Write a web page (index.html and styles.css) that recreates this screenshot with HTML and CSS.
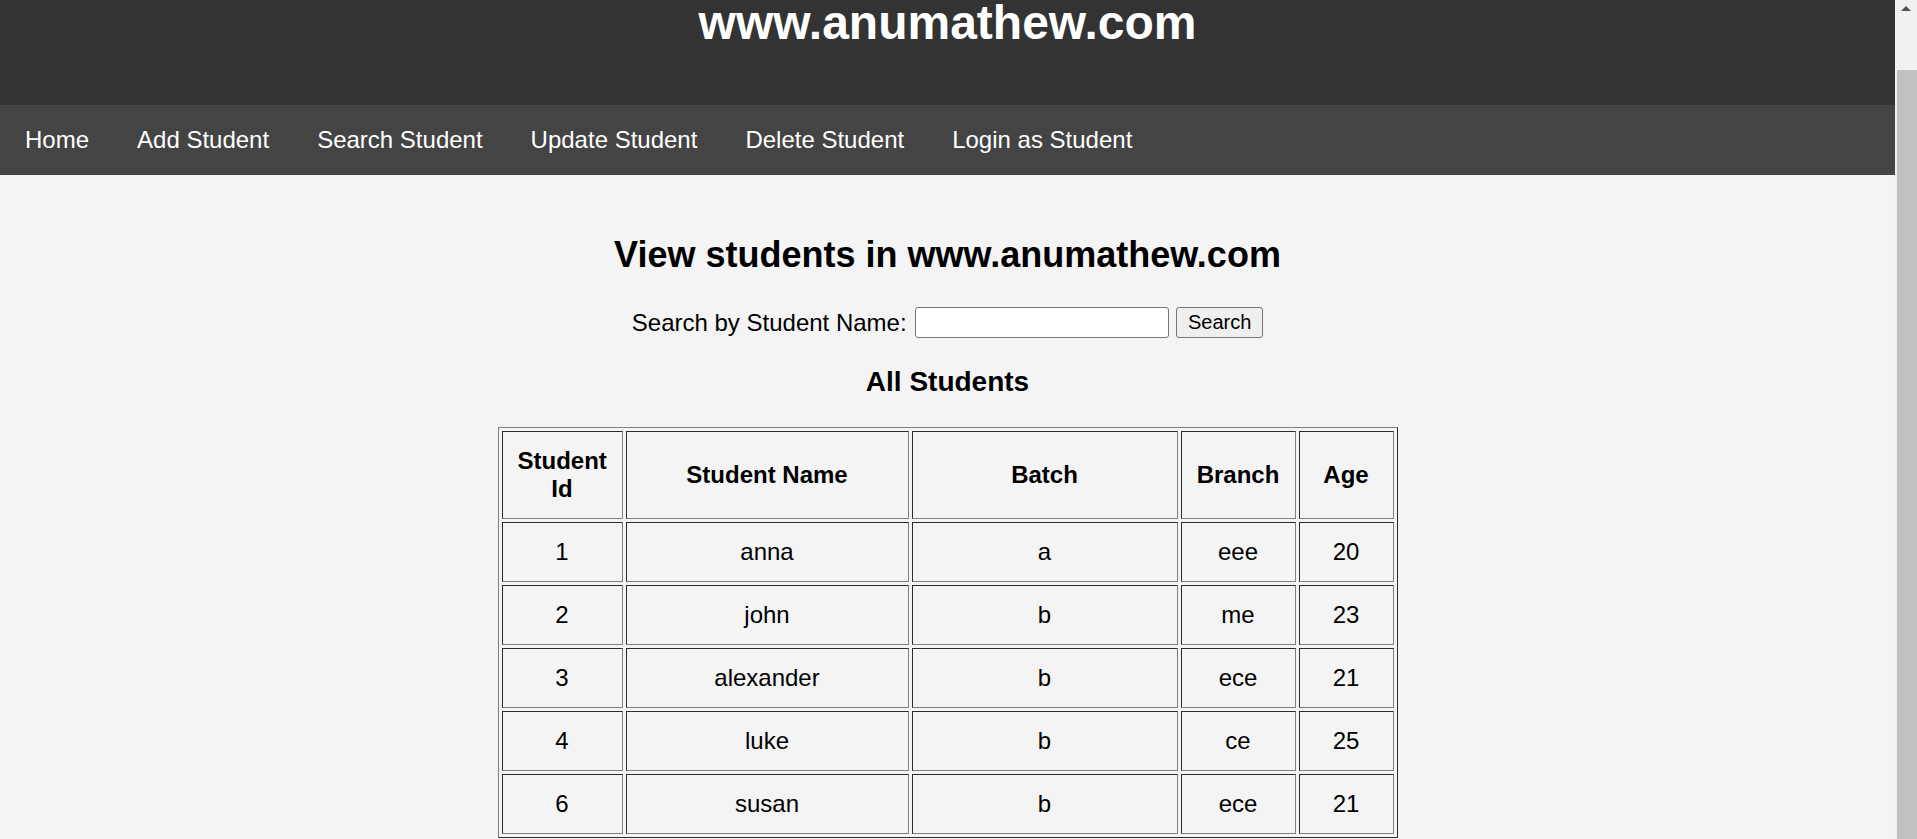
FILE: index.html
```html
<!DOCTYPE html>
<html lang="en">
<head>
<meta charset="utf-8">
<title>View students in www.anumathew.com</title>
<link rel="stylesheet" href="styles.css">
</head>
<body>
<div class="window">
  <div class="page">
    <header class="site-header">
      <h1 class="site-title">www.anumathew.com</h1>
    </header>
    <nav class="site-nav">
      <a class="nav-link" href="#">Home</a>
      <a class="nav-link" href="#">Add Student</a>
      <a class="nav-link" href="#">Search Student</a>
      <a class="nav-link" href="#">Update Student</a>
      <a class="nav-link" href="#">Delete Student</a>
      <a class="nav-link" href="#">Login as Student</a>
    </nav>
    <main class="content">
      <h2 class="page-title">View students in www.anumathew.com</h2>
      <form class="search-form">
        <label class="search-label" for="q">Search by Student Name:</label>
        <input class="search-input" id="q" type="text">
        <button class="search-button" type="button">Search</button>
      </form>
      <h3 class="section-title">All Students</h3>
      <table class="students">
        <thead>
          <tr>
            <th class="col-id">Student Id</th>
            <th class="col-name">Student Name</th>
            <th class="col-batch">Batch</th>
            <th class="col-branch">Branch</th>
            <th class="col-age">Age</th>
          </tr>
        </thead>
        <tbody>
          <tr><td>1</td><td>anna</td><td>a</td><td>eee</td><td>20</td></tr>
          <tr><td>2</td><td>john</td><td>b</td><td>me</td><td>23</td></tr>
          <tr><td>3</td><td>alexander</td><td>b</td><td>ece</td><td>21</td></tr>
          <tr><td>4</td><td>luke</td><td>b</td><td>ce</td><td>25</td></tr>
          <tr><td>6</td><td>susan</td><td>b</td><td>ece</td><td>21</td></tr>
        </tbody>
      </table>
    </main>
  </div>
  <div class="scrollbar">
    <div class="scroll-arrow-box"><div class="scroll-arrow"></div></div>
    <div class="scroll-thumb"></div>
  </div>
</div>
</body>
</html>
```

FILE: styles.css
```css
html, body {
  margin: 0;
  padding: 0;
  height: 100%;
  overflow: hidden;
}

body {
  font-family: "Liberation Sans", Arial, sans-serif;
  font-size: 24px;
  color: #000;
  background: #f4f4f4;
}

.window {
  display: flex;
  height: 100vh;
}

.page {
  flex: 1;
  min-width: 0;
  overflow: hidden;
  background: #f4f4f4;
}

.site-header {
  height: 105px;
  padding-top: 5px;
  box-sizing: border-box;
  background: #333333;
  text-align: center;
}

.site-title {
  margin: 0;
  font-size: 48px;
  line-height: 35px;
  font-weight: bold;
  color: #ffffff;
}

.site-nav {
  display: flex;
  align-items: center;
  height: 70px;
  background: #444444;
}

.nav-link {
  padding: 0 24px;
  color: #ffffff;
  text-decoration: none;
  font-size: 24px;
}

.nav-link:first-child {
  padding-left: 25px;
}

.content {
  padding-top: 59px;
  text-align: center;
}

.page-title {
  margin: 0;
  font-size: 36px;
  font-weight: bold;
}

.search-form {
  display: flex;
  justify-content: center;
  align-items: center;
  margin-top: 31px;
  height: 31px;
}

.search-label {
  font-size: 24px;
  margin-right: 8.6px;
}

.search-input {
  box-sizing: border-box;
  width: 254px;
  height: 31px;
  margin: 0 7px 0 0;
  padding: 1px 3px;
  border: 1px solid #767676;
  border-radius: 3px;
  background: #ffffff;
  font-family: "Liberation Sans", Arial, sans-serif;
  font-size: 20px;
}

.search-button {
  box-sizing: border-box;
  width: 87px;
  height: 31px;
  margin: 0;
  padding: 0;
  border: 1px solid #767676;
  border-radius: 3px;
  background: #efefef;
  color: #000;
  font-family: "Liberation Sans", Arial, sans-serif;
  font-size: 20px;
}

.section-title {
  margin: 28px 0 29px;
  font-size: 28px;
  font-weight: bold;
}

.students {
  table-layout: fixed;
  width: 900px;
  margin: 0 auto;
  border: 1px outset gray;
  border-spacing: 3px;
  font-size: 24px;
}

.students th,
.students td {
  box-sizing: border-box;
  padding: 15px;
  border: 1px inset gray;
  text-align: center;
  vertical-align: middle;
}

.students th {
  font-weight: bold;
}

.col-id { width: 121px; }
.col-name { width: 283px; }
.col-batch { width: 266px; }
.col-branch { width: 115px; }
.col-age { width: 95px; }

.scrollbar {
  width: 22px;
  flex: none;
  display: flex;
  flex-direction: column;
  background: #f1f1f1;
}

.scroll-arrow-box {
  height: 70px;
  display: flex;
  justify-content: center;
  padding-top: 6px;
  box-sizing: border-box;
}

.scroll-arrow {
  width: 0;
  height: 0;
  border-left: 5px solid transparent;
  border-right: 5px solid transparent;
  border-bottom: 5px solid #505050;
}

.scroll-thumb {
  flex: 1;
  margin-left: 2px;
  background: #c1c1c1;
}
```
